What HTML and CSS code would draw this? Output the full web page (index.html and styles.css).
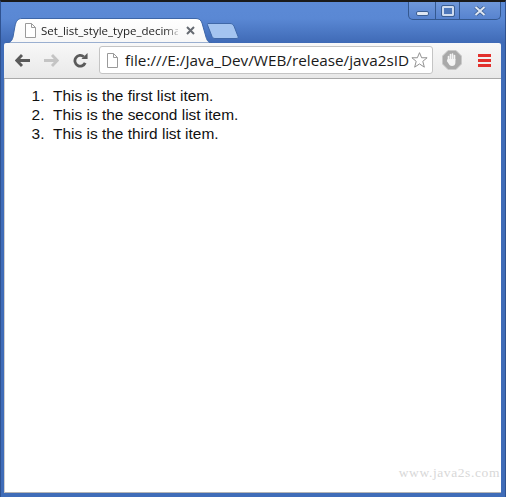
FILE: index.html
```html
<!DOCTYPE html>
<html lang="en">
<head>
<meta charset="utf-8">
<title>Set_list_style_type_decimal</title>
<link rel="stylesheet" href="styles.css">
</head>
<body>
<div class="window">
  <header class="titlebar">
    <div class="tabstrip">
      <div class="tab">
        <svg class="tab-shape" width="210" height="25" viewBox="0 0 210 25"><defs><linearGradient id="tabfill" x1="0" y1="0" x2="0" y2="1"><stop offset="0" stop-color="#ffffff"/><stop offset="1" stop-color="#f7f7f7"/></linearGradient></defs><path d="M1 25C5 25 7 23 8 19L10 8C11 3 13 .5 17 .5H191C194 .5 196 2 197 5L201 19C202 23 204 25 207 25Z" fill="url(#tabfill)" stroke="#3d66a8"/></svg>
        <svg class="page-icon tab-page" width="12" height="15" viewBox="0 0 12 15"><path d="M1.500 .5H7.500L11.500 4.500V14.500H1.500Z M7.500 .5V4.500H11.500" fill="#fff" stroke="#9a9a9a"/></svg>
        <span class="tab-title">Set_list_style_type_decima</span>
        <svg class="tab-close" width="9" height="9" viewBox="0 0 9 9"><path d="M1 1L8 8M8 1L1 8" stroke="#666b72" stroke-width="2"/></svg>
      </div>
      <svg class="newtab" width="32" height="16" viewBox="0 0 32 16"><path d="M1 .5H23C25 .5 26 1.500 27 3L31 13.500C31.500 15 31 15.500 29 15.500H8C6.500 15.500 6 15 5 13.500L.5 2C.2 1 .5 .5 1 .5Z" fill="#a4c4f0" stroke="#3f68a8"/></svg>
    </div>
    <div class="winbtns">
      <div class="winbtn btn-min"><span class="min-glyph"></span></div>
      <div class="winbtn btn-max"><span class="max-glyph"></span></div>
      <div class="winbtn btn-close">
        <svg width="14" height="10" viewBox="0 0 14 10"><path d="M2.500 1L11.500 9M11.500 1L2.500 9" stroke="#3c5f94" stroke-width="3.600"/><path d="M2.500 1L11.500 9M11.500 1L2.500 9" stroke="#dfe7f3" stroke-width="2"/></svg>
      </div>
    </div>
  </header>
  <nav class="toolbar">
    <svg class="navicon icon-back" width="15" height="13" viewBox="0 0 15 13"><path d="M7 1L1.800 6.500L7 12M2.500 6.500H15" fill="none" stroke="#5a5a5a" stroke-width="2.800"/></svg>
    <svg class="navicon icon-fwd" width="15" height="13" viewBox="0 0 15 13"><path d="M8 1L13.200 6.500L8 12M12.500 6.500H0" fill="none" stroke="#c4c4c4" stroke-width="2.800"/></svg>
    <svg class="navicon icon-reload" width="15" height="15" viewBox="0 0 16 16"><path d="M13 10.500A5.700 5.700 0 1 1 11.500 4" fill="none" stroke="#5a5a5a" stroke-width="3"/><path d="M9 6.500H15.500V0Z" fill="#5a5a5a"/></svg>
    <div class="omnibox">
      <svg class="page-icon url-page" width="12" height="15" viewBox="0 0 12 15"><path d="M1.500 .5H7.500L11.500 4.500V14.500H1.500Z M7.500 .5V4.500H11.500" fill="#fff" stroke="#9a9a9a"/></svg>
      <span class="url">file:///E:/Java_Dev/WEB/release/java2sID</span>
      <svg class="star" width="17" height="18" viewBox="0 0 19 19"><path d="M9.500 1.300L11.900 7H18L13.200 11L14.900 17.500L9.500 13.900L4.100 17.500L5.800 11L1 7H7.100Z" fill="#fff" stroke="#8f8f8f" stroke-width="1.100"/></svg>
    </div>
    <svg class="adblock" width="20" height="20" viewBox="0 0 20 20"><path d="M6 .5H14L19.500 6V14L14 19.500H6L.5 14V6Z" fill="#a9a9a9" stroke="#c9c9c9"/><path d="M6.500 10V6.500M8.500 10V4.500M10.500 10V4M12.500 10V5.500" stroke="#f4f4f4" stroke-width="1.600" stroke-linecap="round"/><path d="M5.700 9H13.400V12.500C13.400 15 12 16 10 16C8 16 7.300 15 6.500 13.500L4.800 11Z" fill="#f4f4f4"/></svg>
    <div class="menu"><span></span><span></span><span></span></div>
  </nav>
  <main class="content">
    <ol class="list">
      <li>This is the first list item.</li>
      <li>This is the second list item.</li>
      <li>This is the third list item.</li>
    </ol>
    <div class="watermark">www.java2s.com</div>
  </main>
</div>
</body>
</html>
```
FILE: styles.css
```css
* { box-sizing: border-box; }
html, body { margin: 0; padding: 0; height: 100%; background: #fff; }
body { overflow: hidden; }

.window {
  width: 506px;
  height: 497px;
  display: flex;
  flex-direction: column;
  background: #3f6cb8;
  border-top: 2px solid #1a1a1a;
  border-left: 1px solid #2f5290;
  border-right: 1px solid #2f5290;
  padding: 0 4px 4px 3px;
}

.titlebar {
  height: 41px;
  margin: 0 -4px 0 -3px;
  padding: 0 3px 0 4px;
  display: flex;
  justify-content: space-between;
  background: linear-gradient(#5c8ad6 0%, #5a88d4 40%, #3f6ab6 100%);
  flex: none;
}

.tabstrip { display: flex; align-items: flex-start; padding-top: 16px; }

.tab {
  position: relative;
  width: 202px;
  height: 25px;
  display: flex;
  align-items: center;
  flex: none;
  padding-left: 19px;
}
.tab-shape { position: absolute; left: 0; top: 0; }
.tab-page { position: relative; flex: none; }
.tab-title {
  position: relative;
  margin-left: 5px;
  width: 137px;
  font: 11.500px/14px "Open Sans", "Noto Sans", sans-serif;
  color: #1c1c1c;
  white-space: nowrap;
  -webkit-mask-image: linear-gradient(90deg, #000 90%, rgba(0,0,0,.25) 100%);
  mask-image: linear-gradient(90deg, #000 90%, rgba(0,0,0,.25) 100%);
}
.tab-close { position: relative; margin-left: 8px; flex: none; }

.newtab { margin: 5px 0 0 0; flex: none; position: relative; }

.winbtns {
  display: flex;
  height: 18px;
  width: 93px;
  margin-right: 1px;
  border: 1px solid #34588f;
  border-top: none;
  border-radius: 0 0 5px 5px;
  background: linear-gradient(#6f98da, #5783cf);
}
.winbtn { display: flex; align-items: center; justify-content: center; }
.btn-min { width: 27px; border-right: 1px solid #34588f; }
.btn-max { width: 24px; border-right: 1px solid #34588f; }
.btn-close { flex: 1; }
.min-glyph {
  width: 13px; height: 5px; margin-top: 6px;
  background: #dfe7f3; border: 1px solid #3c5f94; border-radius: 2px;
}
.max-glyph {
  width: 12px; height: 10px;
  background: #4f78ba; border: 2px solid #cfdcef; outline: 1px solid #3c5f94;
  border-radius: 1px;
}

.toolbar {
  height: 36px;
  flex: none;
  display: flex;
  align-items: center;
  background: linear-gradient(#f8f8f8, #e8e8e8);
  border-bottom: 1px solid #a9a9a9;
  border-radius: 2px 2px 0 0;
  padding: 0 0 1px 11px;
}
.navicon { flex: none; }
.icon-fwd { margin-left: 14px; }
.icon-reload { margin-left: 14px; }

.omnibox {
  margin-left: 11px;
  width: 334px;
  height: 28px;
  flex: none;
  display: flex;
  align-items: center;
  background: #fff;
  border: 1px solid #c4c4c4;
  border-radius: 3px;
  padding-left: 6px;
}
.url-page { flex: none; }
.url {
  margin-left: 7px;
  width: 282px;
  flex: none;
  white-space: nowrap;
  font: 15.300px/22px "Open Sans", "Noto Sans", sans-serif;
  color: #1a1a1a;
}
.star { flex: none; margin-left: 4px; }

.adblock { flex: none; margin-left: 9px; }

.menu { margin-left: 16px; width: 13px; display: flex; flex-direction: column; gap: 2px; flex: none; }
.menu span { display: block; height: 3px; background: #e2302c; }

.content {
  position: relative;
  flex: 1;
  background: #fff;
  border-left: 1px solid #cfcfcf;
  border-bottom: 1px solid #b5b5b5;
  font: 15.450px/19px "Liberation Sans", Arial, sans-serif;
  color: #111;
}
.list { margin: 7px 0 0 0; padding: 0 0 0 48px; }
.list li::marker { content: counter(list-item) ".\00a0\00a0"; }
.watermark {
  position: absolute;
  right: 1px;
  bottom: 11px;
  font: 13.500px/16px "Liberation Serif", serif;
  letter-spacing: .6px;
  color: #d8d8d8;
}
```
